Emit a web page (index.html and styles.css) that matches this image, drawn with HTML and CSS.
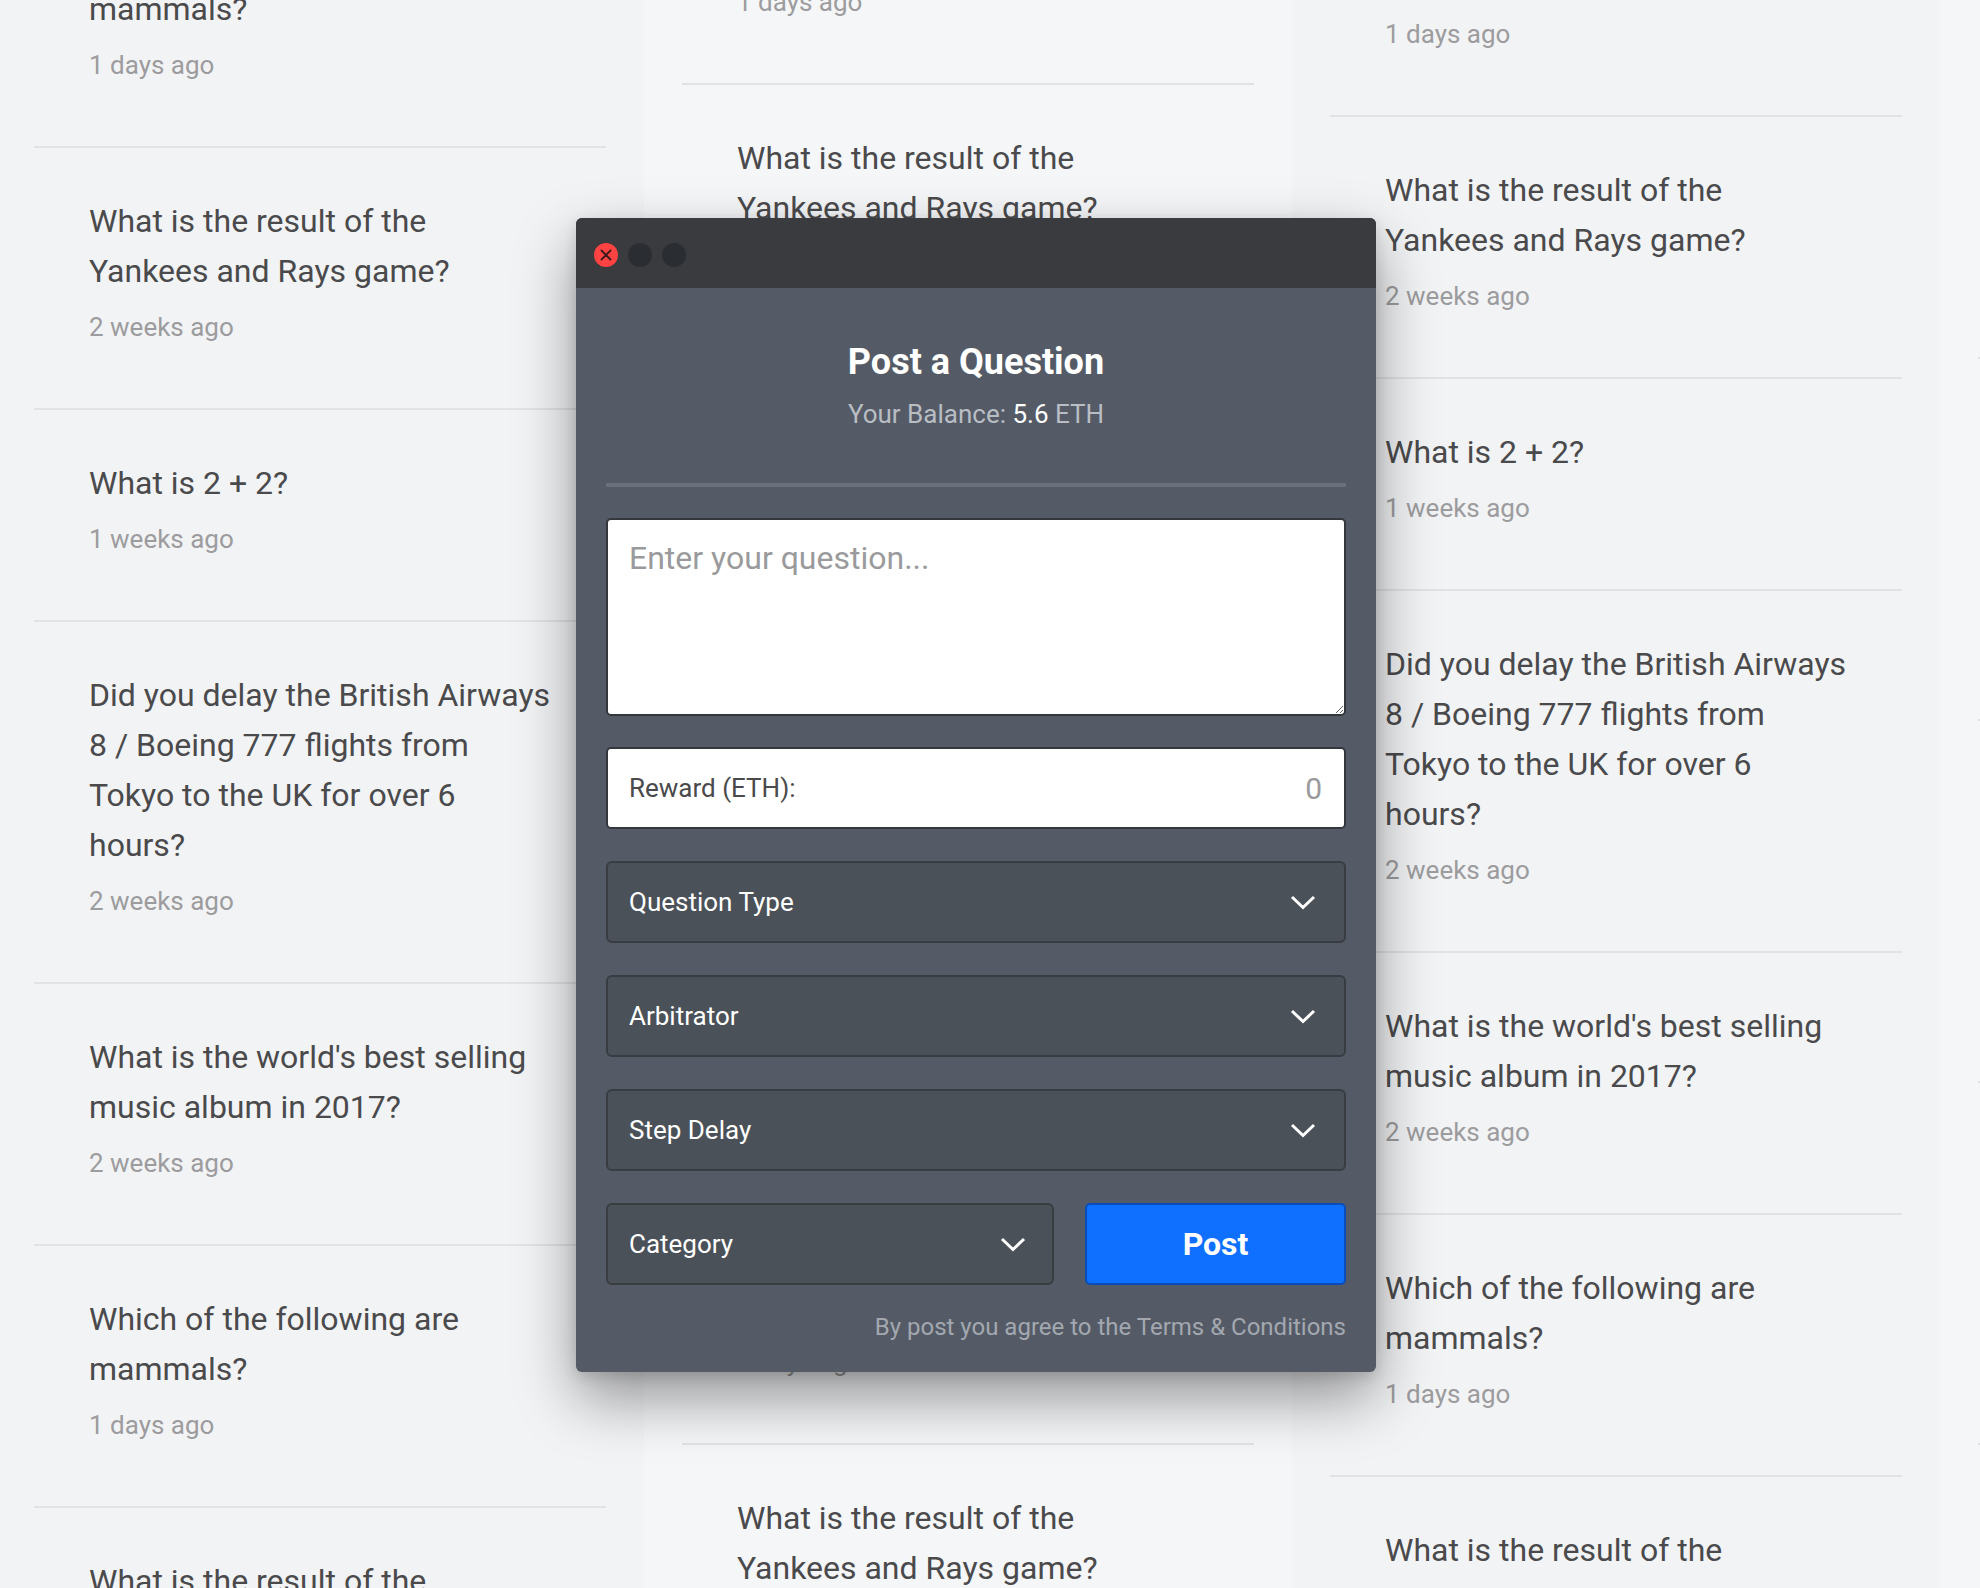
FILE: index.html
```html
<!DOCTYPE html>
<html lang="en">
<head>
<meta charset="utf-8">
<title>Post a Question</title>
<link rel="stylesheet" href="styles.css">
</head>
<body>
<div class="board">
  <div class="col col-1">
    <div class="card"><p class="q">Which of the following are<br>mammals?</p><p class="t">1 days ago</p></div>
    <div class="card"><p class="q">What is the result of the<br>Yankees and Rays game?</p><p class="t">2 weeks ago</p></div>
    <div class="card"><p class="q">What is 2 + 2?</p><p class="t">1 weeks ago</p></div>
    <div class="card"><p class="q">Did you delay the British Airways<br>8 / Boeing 777 flights from<br>Tokyo to the UK for over 6<br>hours?</p><p class="t">2 weeks ago</p></div>
    <div class="card"><p class="q">What is the world's best selling<br>music album in 2017?</p><p class="t">2 weeks ago</p></div>
    <div class="card"><p class="q">Which of the following are<br>mammals?</p><p class="t">1 days ago</p></div>
    <div class="card"><p class="q">What is the result of the<br>Yankees and Rays game?</p><p class="t">2 weeks ago</p></div>
  </div>
  <div class="col col-2">
    <div class="card"><p class="q">Which of the following are<br>mammals?</p><p class="t">1 days ago</p></div>
    <div class="card"><p class="q">What is the result of the<br>Yankees and Rays game?</p><p class="t">2 weeks ago</p></div>
    <div class="card"><p class="q">What is 2 + 2?</p><p class="t">1 weeks ago</p></div>
    <div class="card"><p class="q">Did you delay the British Airways<br>8 / Boeing 777 flights from<br>Tokyo to the UK for over 6<br>hours?</p><p class="t">2 weeks ago</p></div>
    <div class="card"><p class="q">What is the world's best selling<br>music album in 2017?</p><p class="t">2 weeks ago</p></div>
    <div class="card"><p class="q">Which of the following are<br>mammals?</p><p class="t">1 days ago</p></div>
    <div class="card"><p class="q">What is the result of the<br>Yankees and Rays game?</p><p class="t">2 weeks ago</p></div>
  </div>
  <div class="col col-3">
    <div class="card"><p class="q">Which of the following are<br>mammals?</p><p class="t">1 days ago</p></div>
    <div class="card"><p class="q">What is the result of the<br>Yankees and Rays game?</p><p class="t">2 weeks ago</p></div>
    <div class="card"><p class="q">What is 2 + 2?</p><p class="t">1 weeks ago</p></div>
    <div class="card"><p class="q">Did you delay the British Airways<br>8 / Boeing 777 flights from<br>Tokyo to the UK for over 6<br>hours?</p><p class="t">2 weeks ago</p></div>
    <div class="card"><p class="q">What is the world's best selling<br>music album in 2017?</p><p class="t">2 weeks ago</p></div>
    <div class="card"><p class="q">Which of the following are<br>mammals?</p><p class="t">1 days ago</p></div>
    <div class="card"><p class="q">What is the result of the<br>Yankees and Rays game?</p><p class="t">2 weeks ago</p></div>
  </div>
  <div class="col col-4">
    <div class="card"><p class="q">Did you delay the British Airways<br>8 / Boeing 777 flights from<br>Tokyo to the UK for over 6<br>hours?</p><p class="t">2 weeks ago</p></div>
    <div class="card"><p class="q">Did you delay the British Airways<br>8 / Boeing 777 flights from<br>Tokyo to the UK for over 6<br>hours?</p><p class="t">2 weeks ago</p></div>
    <div class="card"><p class="q">Did you delay the British Airways<br>8 / Boeing 777 flights from<br>Tokyo to the UK for over 6<br>hours?</p><p class="t">2 weeks ago</p></div>
    <div class="card"><p class="q">Did you delay the British Airways<br>8 / Boeing 777 flights from<br>Tokyo to the UK for over 6<br>hours?</p><p class="t">2 weeks ago</p></div>
    <div class="card"><p class="q">Did you delay the British Airways<br>8 / Boeing 777 flights from<br>Tokyo to the UK for over 6<br>hours?</p><p class="t">2 weeks ago</p></div>
  </div>
</div>

<div class="modal">
  <div class="titlebar">
    <span class="dot dot-close">
      <svg viewBox="0 0 24 24" width="24" height="24"><path d="M7.5 7.5 L16.5 16.5 M16.5 7.5 L7.5 16.5" stroke="#3b1a1a" stroke-width="1.8" stroke-linecap="round" fill="none"/></svg>
    </span>
    <span class="dot"></span>
    <span class="dot"></span>
  </div>
  <div class="modal-body">
    <h1 class="title">Post a Question</h1>
    <p class="balance">Your Balance: <span class="amount">5.6</span> ETH</p>
    <div class="divider"></div>
    <textarea class="field question" placeholder="Enter your question..."></textarea>
    <div class="field reward"><span class="reward-label">Reward (ETH):</span><span class="reward-value">0</span></div>
    <div class="select"><span>Question Type</span><svg class="chev" viewBox="0 0 26 15" width="26" height="15"><path d="M2 2 L13 12.5 L24 2" stroke="#fff" stroke-width="3" fill="none"/></svg></div>
    <div class="select"><span>Arbitrator</span><svg class="chev" viewBox="0 0 26 15" width="26" height="15"><path d="M2 2 L13 12.5 L24 2" stroke="#fff" stroke-width="3" fill="none"/></svg></div>
    <div class="select"><span>Step Delay</span><svg class="chev" viewBox="0 0 26 15" width="26" height="15"><path d="M2 2 L13 12.5 L24 2" stroke="#fff" stroke-width="3" fill="none"/></svg></div>
    <div class="actions">
      <div class="select category"><span>Category</span><svg class="chev" viewBox="0 0 26 15" width="26" height="15"><path d="M2 2 L13 12.5 L24 2" stroke="#fff" stroke-width="3" fill="none"/></svg></div>
      <button class="post" type="button">Post</button>
    </div>
    <p class="terms">By post you agree to the Terms &amp; Conditions</p>
  </div>
</div>
</body>
</html>
```

FILE: styles.css
```css
* { box-sizing: border-box; }

html, body {
  margin: 0;
  padding: 0;
}

body {
  width: 1980px;
  height: 1588px;
  overflow: hidden;
  position: relative;
  background: #f2f3f5;
  font-family: Roboto, "Liberation Sans", Arial, sans-serif;
}

.board {
  display: flex;
  align-items: flex-start;
  margin-left: -4px;
  height: 1588px;
  overflow: hidden;
}

.col {
  flex: 0 0 648px;
  width: 648px;
  padding: 0 38px;
  min-height: 2000px;
}

.col-1 { margin-top: -114px; background: #f2f3f5; }
.col-2 { margin-top: -177px; background: #f5f6f8; }
.col-3 { margin-top: -145px; background: #f2f3f5; }
.col-4 { margin-top: -3px; background: #f5f6f8; }

.card {
  padding: 48px 36px 63px 55px;
  border-bottom: 2px solid #e1e2e5;
}

.q {
  margin: 0;
  font-size: 32px;
  line-height: 50px;
  color: #4a4a4c;
  white-space: nowrap;
}

.t {
  margin: 13px 0 0;
  font-size: 26px;
  line-height: 36px;
  color: #9c9c9e;
}

/* Modal */
.modal {
  position: absolute;
  left: 576px;
  top: 218px;
  width: 800px;
  border-radius: 6px;
  background: #545b66;
  box-shadow: 0 26px 60px rgba(0, 0, 0, 0.4), 0 4px 14px rgba(0, 0, 0, 0.12);
}

.titlebar {
  height: 70px;
  background: #3a3b3f;
  border-radius: 6px 6px 0 0;
  display: flex;
  align-items: center;
  gap: 10px;
  padding: 3px 0 0 18px;
}

.dot {
  width: 24px;
  height: 24px;
  border-radius: 50%;
  background: #2a2d32;
  display: block;
}

.dot svg { display: block; }

.dot-close { background: #ff4242; }

.modal-body {
  padding: 52px 30px 29px;
  display: flex;
  flex-direction: column;
}

.title {
  margin: 0;
  text-align: center;
  font-size: 36px;
  line-height: 44px;
  font-weight: 700;
  color: #ffffff;
}

.balance {
  margin: 14px 0 0;
  text-align: center;
  font-size: 26px;
  line-height: 32px;
  color: #b9bdc4;
}

.amount { color: #ffffff; }

.divider {
  margin-top: 53px;
  height: 4px;
  background: #6a717c;
  border-radius: 1px;
}

.field {
  display: block;
  width: 100%;
  background: #ffffff;
  border: 2px solid #34373c;
  border-radius: 5px;
  font-family: inherit;
}

.question {
  margin-top: 31px;
  height: 198px;
  padding: 18px 21px;
  font-size: 32px;
  line-height: 40px;
  color: #4a4a4c;
  resize: vertical;
  outline: none;
}

.question::placeholder { color: #9a9a9c; }

.reward {
  margin-top: 31px;
  height: 82px;
  display: flex;
  align-items: center;
  justify-content: space-between;
  padding: 0 22px 0 21px;
}

.reward-label {
  font-size: 26px;
  color: #4a4a4c;
}

.reward-value {
  font-size: 30px;
  color: #9a9a9c;
}

.select {
  margin-top: 32px;
  height: 82px;
  background: #4b5159;
  border: 2px solid #393c41;
  border-radius: 6px;
  display: flex;
  align-items: center;
  justify-content: space-between;
  padding: 0 28px 0 21px;
  font-size: 26px;
  color: #ffffff;
}

.chev { display: block; }

.actions {
  margin-top: 32px;
  display: flex;
  gap: 31px;
}

.actions .select {
  margin-top: 0;
}

.category {
  flex: 0 0 448px;
  padding-right: 26px;
}

.post {
  flex: 1 1 auto;
  height: 82px;
  background: #0f6ffe;
  border: 2px solid #0a4db9;
  border-radius: 5px;
  color: #ffffff;
  font-family: inherit;
  font-size: 32px;
  font-weight: 700;
  cursor: pointer;
}

.terms {
  margin: 26px 0 0;
  text-align: right;
  font-size: 24px;
  line-height: 32px;
  color: #a3a8b0;
}
```
